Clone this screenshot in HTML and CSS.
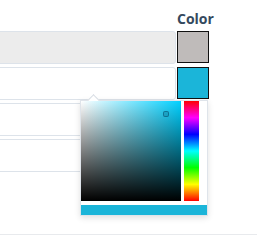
FILE: index.html
```html
<!DOCTYPE html>
<html lang="en">
<head>
    <meta charset="UTF-8">
    <title>Color fields</title>
    <link rel="stylesheet" href="styles.css">
</head>
<body>

    <div class="fields">
        <div class="header-cell"></div>
        <div class="header-cell">Color</div>

        <!-- Rad 1: låst fält -->
        <div class="field disabled"></div>
        <div class="swatch" style="background-color: #bfbbba;"></div>

        <!-- Rad 2 -->
        <div class="field"></div>
        <div class="swatch" style="background-color: #1bb5d9;"></div>

        <div class="field"></div>
        <div></div>

        <div class="field"></div>
        <div></div>
    </div>

    <div class="footer-line"></div>

    <!-- Färgväljaren -->
    <div class="picker">
        <div class="picker-arrow"></div>
        <div class="picker-main">
            <div class="picker-sat">
                <div class="picker-marker"></div>
            </div>
            <div class="picker-hue"></div>
        </div>
        <div class="picker-preview"></div>
    </div>

</body>
</html>
```

FILE: styles.css
```css
body {
    font-family: "Open Sans", Arial, sans-serif;
    margin: 0;
    padding: 0;
    background-color: white;
    position: relative;
}

.fields {
    display: grid;
    grid-template-columns: 186px 32px;
    column-gap: 1px;
    row-gap: 3px;
    margin-left: -10px;
}

.header-cell {
    height: 28px;
    font-size: 14px;
    font-weight: bold;
    line-height: 18px;
    color: #34495e;
    display: flex;
    align-items: flex-end;
    padding-bottom: 3px;
    margin-bottom: -3px;
    white-space: nowrap;
}

.field {
    height: 33px;
    box-sizing: border-box;
    border: 1px solid #dde3ea;
    border-radius: 3px;
    background-color: white;
}

.field.disabled {
    background-color: #ececec;
}

.swatch {
    width: 32px;
    height: 32px;
    box-sizing: border-box;
    border: 1px solid #111;
}

.footer-line {
    margin-top: 62px;
    border-top: 1px solid #e8eaed;
}

.picker {
    position: absolute;
    left: 80px;
    top: 100px;
    width: 126px;
    border: 1px solid #dfe4ea;
    background: white;
    box-shadow: 0 2px 6px rgba(0, 0, 0, 0.12);
}

.picker-arrow {
    position: absolute;
    top: -5px;
    left: 8px;
    width: 8px;
    height: 8px;
    background: white;
    border-left: 1px solid #d6dce3;
    border-top: 1px solid #d6dce3;
    transform: rotate(45deg);
}

.picker-main {
    display: flex;
    gap: 3px;
}

.picker-sat {
    position: relative;
    z-index: 1;
    width: 100px;
    height: 100px;
    background: linear-gradient(to top, #000, rgba(0, 0, 0, 0)),
                linear-gradient(to right, #fff, #00d0ff);
}

.picker-marker {
    position: absolute;
    left: 82px;
    top: 10px;
    width: 6px;
    height: 6px;
    border: 1px solid rgba(0, 60, 90, 0.45);
    border-radius: 2px;
    box-sizing: border-box;
    background: rgba(0, 60, 90, 0.2);
}

.picker-hue {
    width: 15px;
    height: 100px;
    background: linear-gradient(to bottom, #f00, #f0f, #00f, #0ff, #0f0, #ff0, #f00);
}

.picker-preview {
    margin-top: 4px;
    height: 10px;
    background-color: #1bb5d9;
}
```
